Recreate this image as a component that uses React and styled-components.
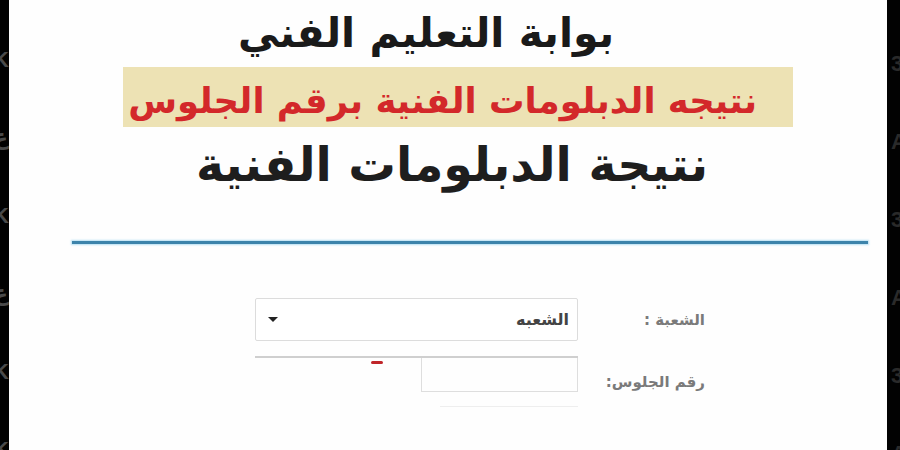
import styled, { createGlobalStyle } from "styled-components";

const GlobalStyle = createGlobalStyle`
  html, body {
    margin: 0;
    padding: 0;
    background: #000;
    overflow: hidden;
  }
  body {
    font-family: "DejaVu Sans", "Noto Sans", sans-serif;
  }
`;

const Frame = styled.div`
  display: flex;
  width: 900px;
  height: 450px;
  overflow: hidden;
`;

const Strip = styled.div`
  width: ${({ $w }) => $w}px;
  flex-shrink: 0;
  background: #020202;
  display: flex;
  flex-direction: column;
  gap: 54px;
  padding-top: ${({ $top }) => $top}px;
  overflow: hidden;
  box-sizing: border-box;

  span {
    display: block;
    height: 24px;
    font-family: "Liberation Sans", "DejaVu Sans", sans-serif;
    font-weight: 700;
    font-size: 22px;
    line-height: 24px;
    color: ${({ $ink }) => $ink};
    margin-left: ${({ $shift }) => $shift}px;
  }
`;

const Panel = styled.main`
  flex: 1;
  background: #fefefe;
  display: flex;
  flex-direction: column;
  align-items: stretch;
  direction: rtl;
`;

const Title = styled.h1`
  margin: 6px 0 0;
  padding-right: 44px;
  text-align: center;
  font-size: 41px;
  line-height: 54px;
  font-weight: 700;
  color: #1a1a1a;
`;

const Band = styled.div`
  margin: 7px 94px 0 114px;
  height: 60px;
  background: #ede2b4;
  display: flex;
  align-items: flex-end;
  padding-right: 36px;
`;

const RedTitle = styled.h2`
  margin: 0 0 5px;
  font-size: 35.4px;
  line-height: 42px;
  font-weight: 700;
  color: #d3282a;
  white-space: nowrap;
`;

const SubTitle = styled.h2`
  margin: 4px 0 0;
  padding-left: 8px;
  text-align: center;
  font-size: 47.5px;
  line-height: 68px;
  font-weight: 700;
  color: #1e1e1e;
`;

const Rule = styled.hr`
  margin: 42px 19px 0 63px;
  height: 3px;
  border: none;
  background: #3d84ab;
  box-shadow: 0 0 2px 1px #b8e0f3;
`;

const Form = styled.form`
  margin: 54px 182px 0 0;
  display: grid;
  grid-template-columns: 127px 323px;
  row-gap: 15px;
  align-items: center;
`;

const Label = styled.label`
  font-size: 15px;
  font-weight: 700;
  color: #7a7a7a;
`;

const SelectBox = styled.div`
  height: 41px;
  border: 1px solid #dcdcdc;
  border-radius: 2px;
  display: flex;
  align-items: center;
  justify-content: space-between;
  padding: 0 8px 0 12px;
  font-size: 16px;
  font-weight: 700;
  color: #444;
  background: #fff;
`;

const Caret = styled.span`
  width: 0;
  height: 0;
  border-left: 5px solid transparent;
  border-right: 5px solid transparent;
  border-top: 5px solid #222;
`;

const InputWrap = styled.div`
  position: relative;
  border-top: 2px solid #cfcfcf;
  height: 50px;
`;

const InputBox = styled.div`
  width: 155px;
  height: 33px;
  border: 1px solid #dedede;
  border-top: none;
`;

const FaintLine = styled.div`
  width: 138px;
  margin-top: 14px;
  border-top: 1px solid #eeeeee;
`;

const RedMark = styled.span`
  position: absolute;
  top: 3px;
  right: 195px;
  width: 12px;
  height: 3px;
  border-radius: 2px;
  background: #c0262a;
`;

const leftMarks = ["K", "غ", "K", "غ", "K", "K"];
const rightMarks = ["3", "A", "3", "A", "3", "A"];

export default function App() {
  return (
    <>
      <GlobalStyle />
      <Frame>
        <Strip $w={9} $top={48} $shift={-7} $ink="#4a4a4a">
          {leftMarks.map((m, i) => (
            <span key={i}>{m}</span>
          ))}
        </Strip>
        <Panel>
          <Title>بوابة التعليم الفني</Title>
          <Band>
            <RedTitle>نتيجه الدبلومات الفنية برقم الجلوس</RedTitle>
          </Band>
          <SubTitle>نتيجة الدبلومات الفنية</SubTitle>
          <Rule />
          <Form>
            <Label>الشعبة :</Label>
            <SelectBox>
              <span>الشعبه</span>
              <Caret />
            </SelectBox>
            <Label>رقم الجلوس:</Label>
            <InputWrap>
              <RedMark />
              <InputBox />
              <FaintLine />
            </InputWrap>
          </Form>
        </Panel>
        <Strip $w={13} $top={52} $shift={4} $ink="#2a2a2a">
          {rightMarks.map((m, i) => (
            <span key={i}>{m}</span>
          ))}
        </Strip>
      </Frame>
    </>
  );
}
